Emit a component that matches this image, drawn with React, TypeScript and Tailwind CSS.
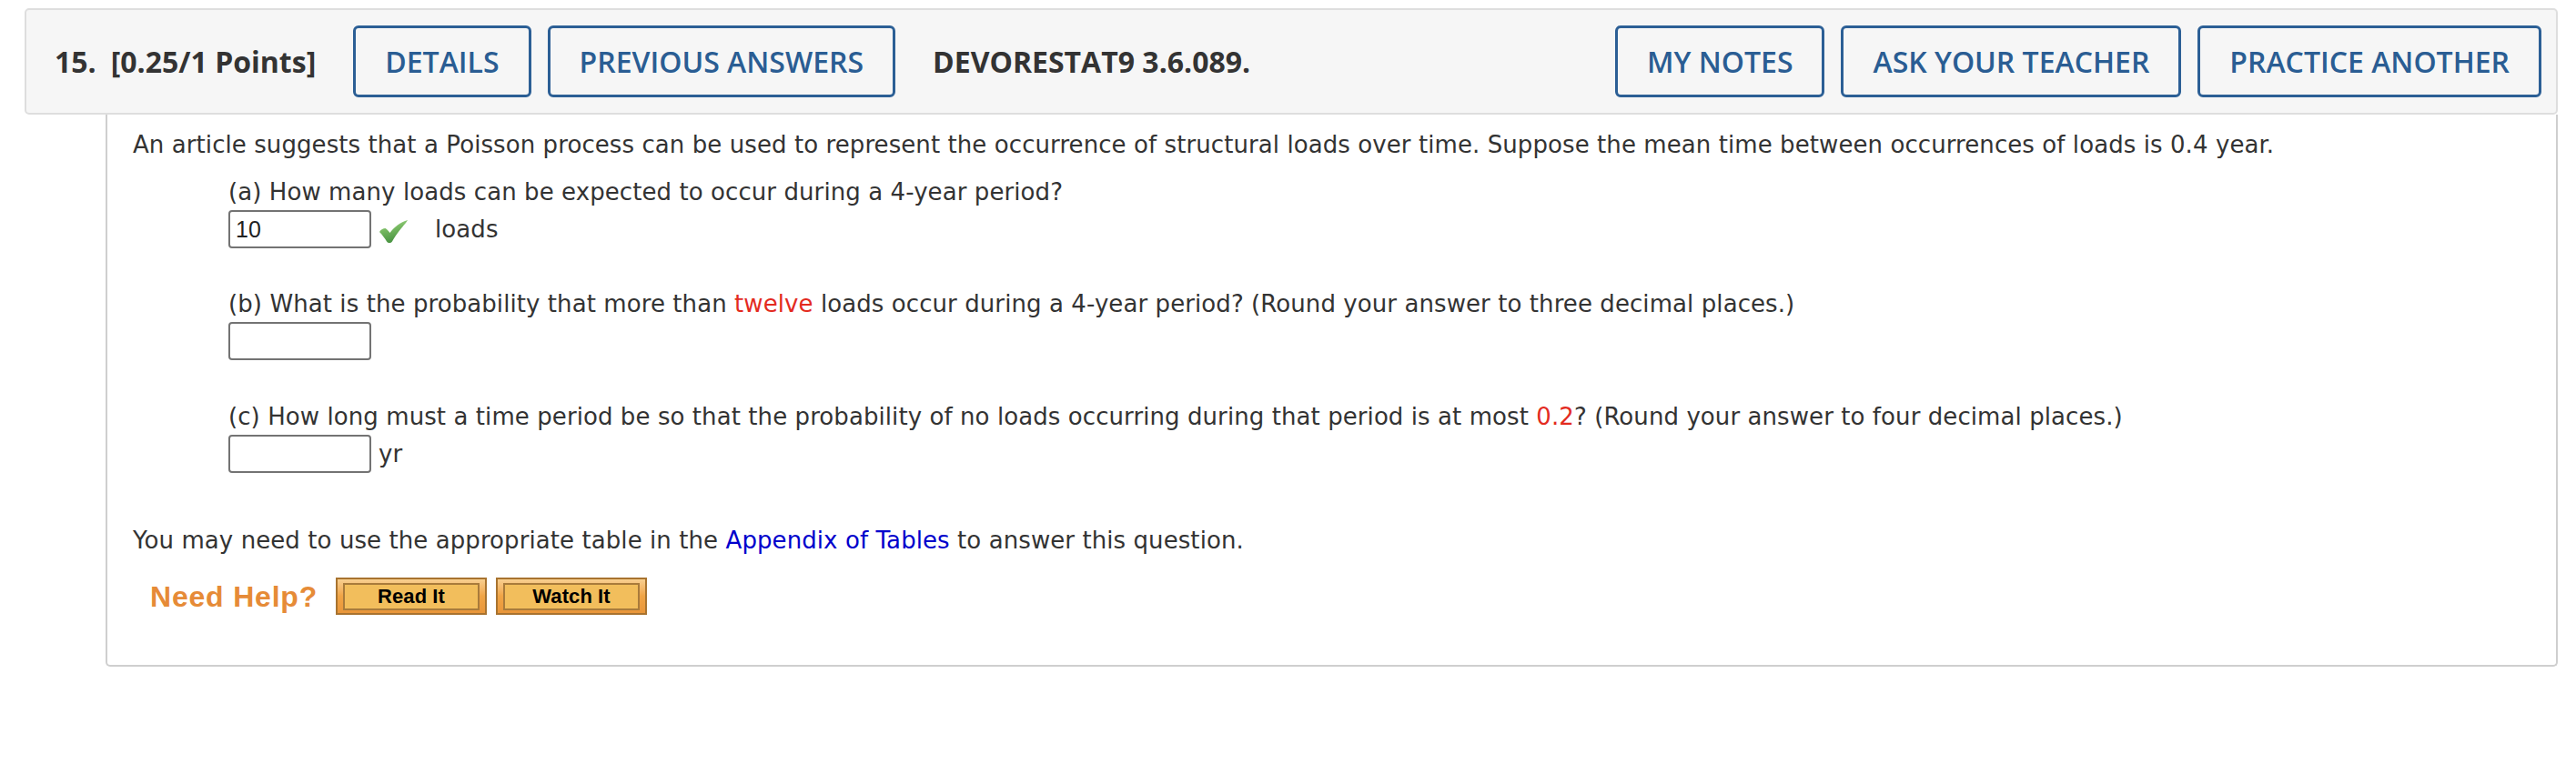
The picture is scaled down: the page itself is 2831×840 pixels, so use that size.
import React from 'react';

const headBtn =
  "h-[79px] px-[32px] flex items-center border-[3px] border-[#2c5f95] rounded-[6px] text-[#2a5d93] text-[32px] font-semibold whitespace-nowrap";

const HeadButton: React.FC<{ label: string }> = ({ label }) => (
  <div className={headBtn}>{label}</div>
);

const Check: React.FC = () => (
  <svg width="31" height="27" viewBox="0 0 31 27" className="ml-[9px] mt-[4px]">
    <defs>
      <linearGradient id="chk" x1="0" y1="0" x2="0.3" y2="1">
        <stop offset="0" stopColor="#a6d98a" />
        <stop offset="0.5" stopColor="#73b65e" />
        <stop offset="1" stopColor="#4a9443" />
      </linearGradient>
    </defs>
    <path
      d="M0 14 C2 11 4 10 6.5 10 C8.5 11 10 13 11.5 15 C16 9 23 3 31 1 C29.5 4.5 21 12 14 24.5 C12.5 26.5 9.5 26.5 8 24.5 C5.5 20.5 3 17 0 14 Z"
      fill="url(#chk)"
    />
  </svg>
);

const AnswerBox: React.FC<{ value?: string }> = ({ value }) => (
  <div className="w-[157px] h-[42px] border-2 border-[#737373] rounded-[4px] bg-white flex items-center px-[6px] text-[25px] text-[#222] font-['Liberation_Sans',Arial,sans-serif]">
    {value}
  </div>
);

const HelpButton: React.FC<{ label: string }> = ({ label }) => (
  <div className="w-[166px] h-[41px] border-2 border-[#a8732f] bg-gradient-to-b from-[#f8cf8f] via-[#f0a445] to-[#e9963a] px-[6px] pt-[4px] pb-[3px]">
    <div className="h-full border-2 border-[#a97b3b] bg-[#f2be5c] flex items-center justify-center text-[22px] font-bold text-black leading-none font-['Liberation_Sans',Arial,sans-serif]">
      {label}
    </div>
  </div>
);

export default function App() {
  return (
    <div className="w-[2831px] h-[840px] bg-white pt-[9px] text-[#333]">
      {/* question header */}
      <div className="ml-[27px] w-[2784px] h-[117px] border-2 border-[#dedede] rounded-[5px] bg-[#f6f6f6] flex items-center pl-[31px] pr-[16px] gap-[18px] font-['Open_Sans',sans-serif]">
        <div className="text-[32px] font-bold text-[#333] whitespace-nowrap mr-[23px]">
          15.<span className="ml-[16px]">[0.25/1 Points]</span>
        </div>
        <HeadButton label="DETAILS" />
        <HeadButton label="PREVIOUS ANSWERS" />
        <div className="ml-[23px] text-[32px] font-bold text-[#333] whitespace-nowrap">DEVORESTAT9 3.6.089.</div>
        <div className="flex-1" />
        <HeadButton label="MY NOTES" />
        <HeadButton label="ASK YOUR TEACHER" />
        <HeadButton label="PRACTICE ANOTHER" />
      </div>

      {/* question body */}
      <div className="ml-[116px] w-[2695px] border-x-2 border-b-2 border-[#cfcfcf] rounded-b-[5px] pl-[28px] pt-[13px] pb-[55px] text-[26px] leading-[40px] tracking-[0.08px] font-['DejaVu_Sans',Verdana,sans-serif]">
        <div>
          An article suggests that a Poisson process can be used to represent the occurrence of structural loads over
          time. Suppose the mean time between occurrences of loads is 0.4 year.
        </div>

        <div className="ml-[105px] mt-[12px]">
          <div>(a) How many loads can be expected to occur during a 4-year period?</div>
          <div className="flex items-center">
            <AnswerBox value="10" />
            <Check />
            <span className="ml-[30px]">loads</span>
          </div>

          <div className="mt-[41px]">
            (b) What is the probability that more than <span className="text-[#e32b1f]">twelve</span> loads occur during a
            4-year period? (Round your answer to three decimal places.)
          </div>
          <AnswerBox />

          <div className="mt-[42px]">
            (c) How long must a time period be so that the probability of no loads occurring during that period is at
            most <span className="text-[#e32b1f]">0.2</span>? (Round your answer to four decimal places.)
          </div>
          <div className="flex items-center">
            <AnswerBox />
            <span className="ml-[8px]">yr</span>
          </div>
        </div>

        <div className="mt-[54px]">
          You may need to use the appropriate table in the <span className="text-[#0000cc]">Appendix of Tables</span> to
          answer this question.
        </div>

        <div className="mt-[21px] ml-[19px] flex items-center">
          <span className="text-[32px] font-bold tracking-[0.8px] text-[#e68b37] leading-none font-['Liberation_Sans',Arial,sans-serif]">
            Need Help?
          </span>
          <div className="ml-[20px] flex gap-[10px]">
            <HelpButton label="Read It" />
            <HelpButton label="Watch It" />
          </div>
        </div>
      </div>
    </div>
  );
}
